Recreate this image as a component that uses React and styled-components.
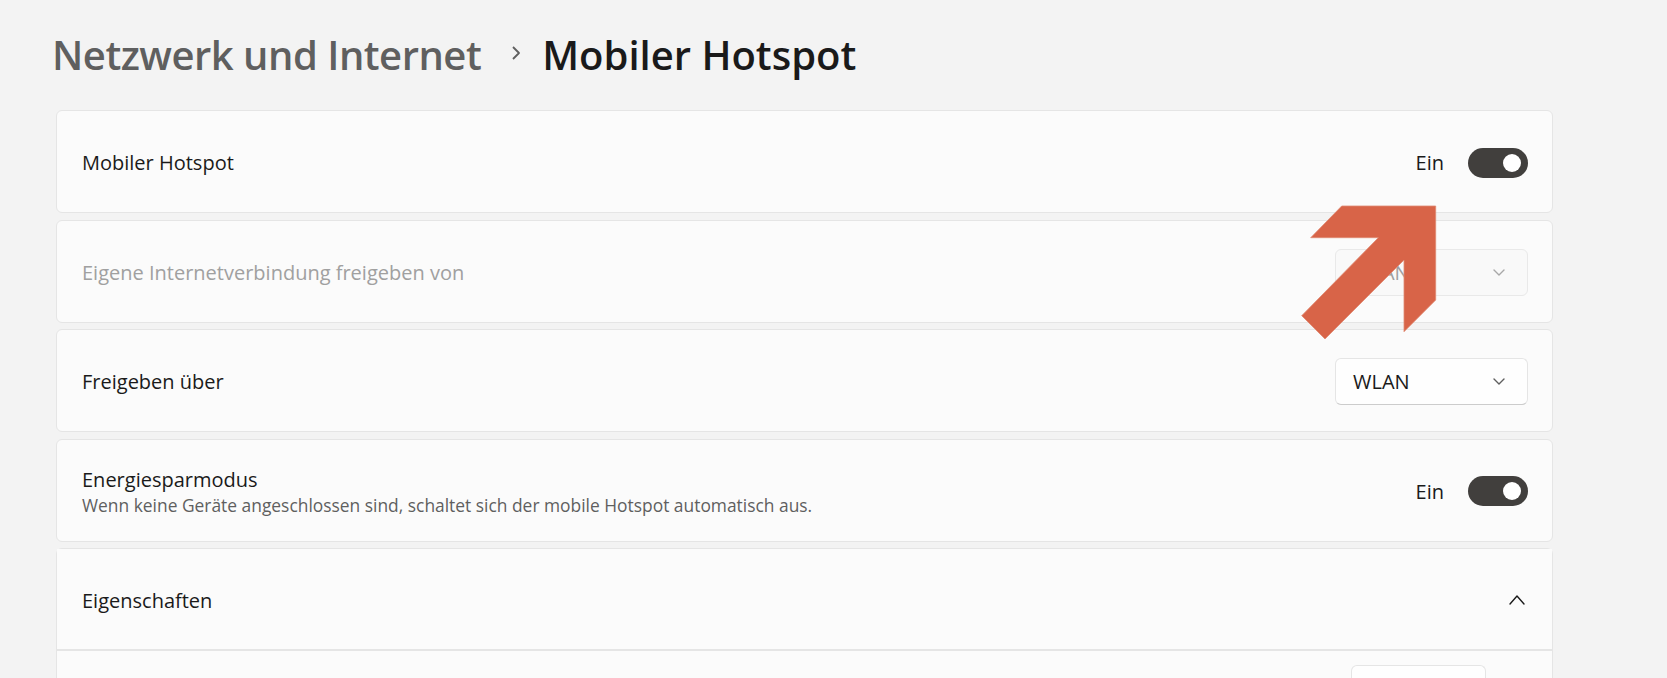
import styled, { createGlobalStyle } from "styled-components";

const GlobalStyle = createGlobalStyle`
  html, body {
    margin: 0;
    padding: 0;
    background: #f3f3f3;
    font-family: "Segoe UI", "Open Sans", "Noto Sans", sans-serif;
    color: #1a1a1a;
    overflow: hidden;
  }
`;

const Page = styled.div`
  position: relative;
  padding: 28px 114px 40px 56px;
`;

const Title = styled.h1`
  display: flex;
  align-items: center;
  margin: 0 0 29px -4px;
  font-size: 40px;
  line-height: 53px;
  font-weight: 600;
`;

const Crumb = styled.span`
  color: ${(p) => (p.$current ? "#1a1a1a" : "#5f5f5f")};
  letter-spacing: ${(p) => (p.$current ? "0" : "-0.5px")};
`;

const CrumbSep = styled.svg`
  width: 10px;
  height: 14px;
  margin: 0 21px 0 30px;
  position: relative;
  top: -2px;
`;

const List = styled.div`
  display: flex;
  flex-direction: column;
  gap: 6.5px;
`;

const Card = styled.div`
  display: flex;
  align-items: center;
  justify-content: space-between;
  box-sizing: border-box;
  height: 103px;
  padding: 2px 24px 0 25px;
  background: #fbfbfb;
  border: 1px solid #e5e5e5;
  border-radius: 6px;
`;

const Expander = styled.div`
  background: #fbfbfb;
  border: 1px solid #e5e5e5;
  border-radius: 6px 6px 0 0;
`;

const ExpanderHead = styled(Card)`
  border: none;
  border-bottom: 2px solid #e5e5e5;
  border-radius: 0;
  height: 102px;
  padding-right: 27px;
`;

const ExpanderBody = styled.div`
  display: flex;
  justify-content: flex-end;
  padding: 14px 66px 30px 25px;
`;

const Label = styled.div`
  font-size: 20px;
  line-height: 27px;
  color: ${(p) => (p.$disabled ? "#a0a0a0" : "#1a1a1a")};
`;

const Desc = styled.div`
  font-size: 17.4px;
  line-height: 24px;
  color: #5f5f5f;
`;

const Right = styled.div`
  display: flex;
  align-items: center;
  gap: 24px;
`;

const State = styled.span`
  font-size: 20px;
  color: #1a1a1a;
`;

const Toggle = styled.div`
  width: 60px;
  height: 30px;
  border-radius: 15px;
  background: #413f3d;
  display: flex;
  align-items: center;
  justify-content: flex-end;
  padding: 0 7px;
  box-sizing: border-box;
  &::after {
    content: "";
    width: 18px;
    height: 18px;
    border-radius: 50%;
    background: #ffffff;
  }
`;

const Select = styled.div`
  display: flex;
  align-items: center;
  justify-content: space-between;
  box-sizing: border-box;
  width: 193px;
  height: 47px;
  padding: 0 22px 0 17px;
  border-radius: 6px;
  font-size: 20px;
  background: ${(p) => (p.$disabled ? "#f9f9f9" : "#fefefe")};
  border: 1px solid ${(p) => (p.$disabled ? "#e9e9e9" : "#e5e5e5")};
  border-bottom-color: ${(p) => (p.$disabled ? "#e9e9e9" : "#cccccc")};
  color: ${(p) => (p.$disabled ? "#a0a0a0" : "#1a1a1a")};
`;

const Button = styled.div`
  box-sizing: border-box;
  width: 135px;
  height: 47px;
  border-radius: 6px;
  background: #fefefe;
  border: 1px solid #e5e5e5;
  border-bottom-color: #cccccc;
`;

const Arrow = styled.svg`
  position: absolute;
  left: 1300px;
  top: 205px;
  width: 140px;
  height: 140px;
`;

const Chevron = ({ up, color = "#5f5f5f", w = 10, h = 5 }) => (
  <svg width={w + 2} height={h + 2} viewBox={`-1 -1 ${w + 2} ${h + 2}`}>
    <polyline
      points={up ? `0,${h} ${w / 2},0 ${w},${h}` : `0,0 ${w / 2},${h} ${w},0`}
      fill="none"
      stroke={color}
      strokeWidth="1.4"
      strokeLinecap="round"
      strokeLinejoin="round"
    />
  </svg>
);

const Switch = () => (
  <Right>
    <State>Ein</State>
    <Toggle />
  </Right>
);

export default function App() {
  return (
    <>
      <GlobalStyle />
      <Page>
        <Title>
          <Crumb>Netzwerk und Internet</Crumb>
          <CrumbSep viewBox="0 0 10 14">
            <polyline points="2,1 8,7 2,13" fill="none" stroke="#5f5f5f" strokeWidth="1.8" strokeLinejoin="round" />
          </CrumbSep>
          <Crumb $current>Mobiler Hotspot</Crumb>
        </Title>

        <List>
          <Card>
            <Label>Mobiler Hotspot</Label>
            <Switch />
          </Card>

          <Card>
            <Label $disabled>Eigene Internetverbindung freigeben von</Label>
            <Select $disabled>
              <span>WLAN</span>
              <Chevron color="#a8a8a8" />
            </Select>
          </Card>

          <Card>
            <Label>Freigeben über</Label>
            <Select>
              <span>WLAN</span>
              <Chevron />
            </Select>
          </Card>

          <Card>
            <div>
              <Label>Energiesparmodus</Label>
              <Desc>Wenn keine Geräte angeschlossen sind, schaltet sich der mobile Hotspot automatisch aus.</Desc>
            </div>
            <Switch />
          </Card>

          <Expander>
            <ExpanderHead>
              <Label>Eigenschaften</Label>
              <Chevron up color="#1a1a1a" w={14} h={8} />
            </ExpanderHead>
            <ExpanderBody>
              <Button />
            </ExpanderBody>
          </Expander>
        </List>

        <Arrow viewBox="0 0 140 140">
          <polygon
            points="41.7,1 135.7,1 135.7,95 104,126.7 104,55 25,134 1.7,110.7 78.3,32.7 10.7,32.7"
            fill="#d86448"
            stroke="#e08a74"
            strokeWidth="0.8"
          />
        </Arrow>
      </Page>
    </>
  );
}
